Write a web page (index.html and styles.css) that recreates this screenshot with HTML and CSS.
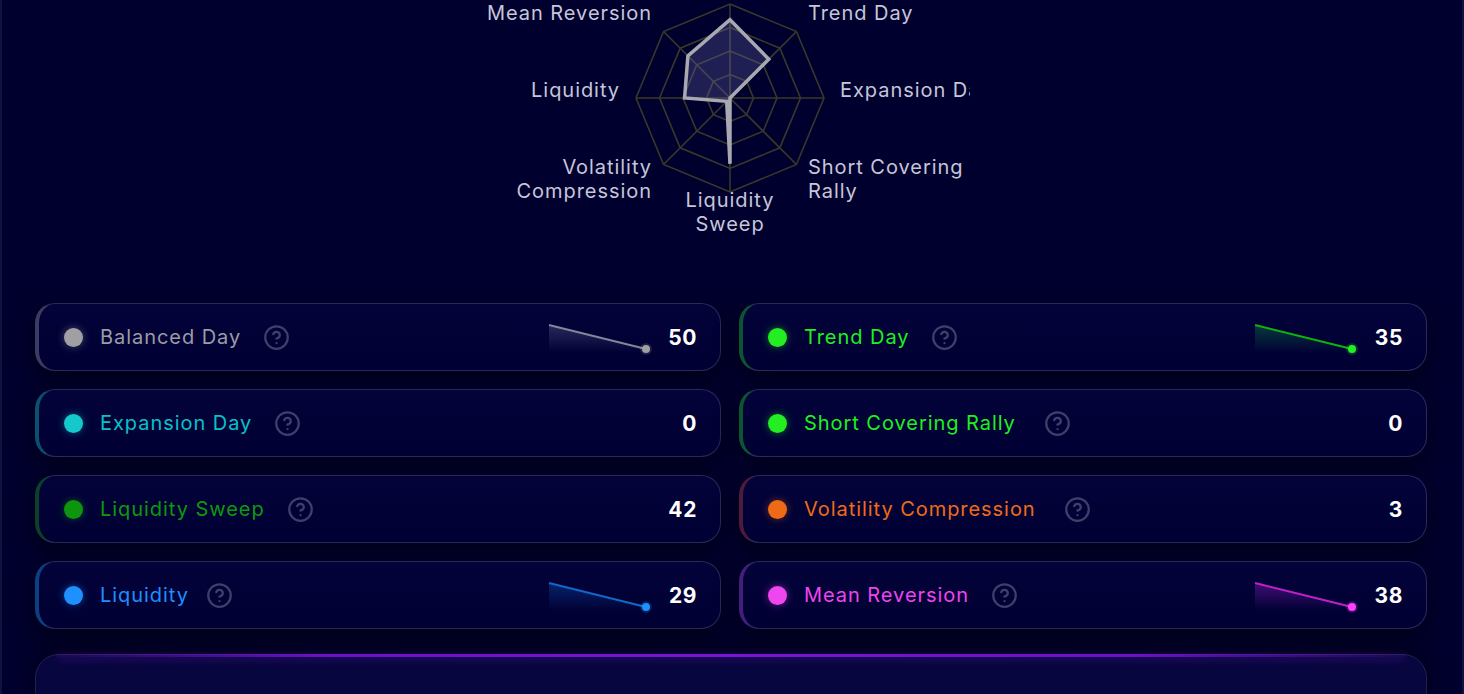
FILE: index.html
```html
<!DOCTYPE html>
<html>
<head>
<meta charset="utf-8">
<link rel="stylesheet" href="styles.css">
</head>
<body>
<div class="panel">
  <section class="chart">
    <svg class="radar" width="480" height="260" viewBox="0 0 480 260">
      <defs>
        <clipPath id="labelClip"><rect x="-60" y="-20" width="540" height="300"/></clipPath>
      </defs>
      <g class="grid-lines">
        <polygon points="240,4 306.47,31.53 334,98 306.47,164.47 240,192 173.53,164.47 146,98 173.53,31.53"/>
        <polygon points="240,27.5 289.85,48.15 310.5,98 289.85,147.85 240,168.5 190.15,147.85 169.5,98 190.15,48.15"/>
        <polygon points="240,51 273.23,64.77 287,98 273.23,131.23 240,145 206.77,131.23 193,98 206.77,64.77"/>
        <polygon points="240,74.5 256.62,81.38 263.5,98 256.62,114.62 240,121.5 223.38,114.62 216.5,98 223.38,81.38"/>
        <line x1="240" y1="98" x2="240" y2="4"/>
        <line x1="240" y1="98" x2="306.47" y2="31.53"/>
        <line x1="240" y1="98" x2="334" y2="98"/>
        <line x1="240" y1="98" x2="306.47" y2="164.47"/>
        <line x1="240" y1="98" x2="240" y2="192"/>
        <line x1="240" y1="98" x2="173.53" y2="164.47"/>
        <line x1="240" y1="98" x2="146" y2="98"/>
        <line x1="240" y1="98" x2="173.53" y2="31.53"/>
      </g>
      <polygon class="data" points="240,19.67 278.77,59.23 240,98 240,98 240,163.8 236.68,101.32 194.57,98 197.9,55.9"/>
      <g class="labels" clip-path="url(#labelClip)">
        <text x="162" y="20" text-anchor="end">Mean Reversion</text>
        <text x="318" y="20">Trend Day</text>
        <text x="130" y="97" text-anchor="end">Liquidity</text>
        <text x="350" y="97">Expansion Day</text>
        <text x="162" y="174" text-anchor="end">Volatility</text>
        <text x="162" y="198" text-anchor="end">Compression</text>
        <text x="318" y="174">Short Covering</text>
        <text x="318" y="198">Rally</text>
        <text x="240" y="207" text-anchor="middle">Liquidity</text>
        <text x="240" y="231" text-anchor="middle">Sweep</text>
      </g>
    </svg>
  </section>

  <div class="cards">
    <div class="card t-balanced">
      <span class="dot"></span>
      <span class="name">Balanced Day</span>
      <svg class="help" viewBox="0 0 24 24"><circle cx="12" cy="12" r="10"/><path d="M9.09 9a3 3 0 0 1 5.83 1c0 2-3 3-3 3"/><path d="M12 17h.01"/></svg>
      <span class="spacer"></span>
      <svg class="spark" viewBox="0 0 104 30"><defs><linearGradient id="g1" x1="0" y1="0" x2="0" y2="1"><stop offset="0" stop-color="#7070a0" stop-opacity="0.35"/><stop offset="1" stop-color="#7070a0" stop-opacity="0"/></linearGradient></defs><polygon points="2,3 99,27 104,30 2,30" fill="url(#g1)"/><line x1="2" y1="3" x2="99" y2="27" stroke="#85859a" stroke-width="2"/><circle cx="99" cy="27" r="6" fill="#a0a0a0" opacity="0.18"/><circle cx="99" cy="27" r="4" fill="#a0a0a0"/></svg>
      <span class="value">50</span>
    </div>
    <div class="card t-trend">
      <span class="dot"></span>
      <span class="name">Trend Day</span>
      <svg class="help" viewBox="0 0 24 24"><circle cx="12" cy="12" r="10"/><path d="M9.09 9a3 3 0 0 1 5.83 1c0 2-3 3-3 3"/><path d="M12 17h.01"/></svg>
      <span class="spacer"></span>
      <svg class="spark" viewBox="0 0 104 30"><defs><linearGradient id="g2" x1="0" y1="0" x2="0" y2="1"><stop offset="0" stop-color="#10a040" stop-opacity="0.35"/><stop offset="1" stop-color="#10a040" stop-opacity="0"/></linearGradient></defs><polygon points="2,3 99,27 104,30 2,30" fill="url(#g2)"/><line x1="2" y1="3" x2="99" y2="27" stroke="#0eb30e" stroke-width="2"/><circle cx="99" cy="27" r="6" fill="#22ee22" opacity="0.2"/><circle cx="99" cy="27" r="4" fill="#22ee22"/></svg>
      <span class="value">35</span>
    </div>

    <div class="card t-expansion">
      <span class="dot"></span>
      <span class="name">Expansion Day</span>
      <svg class="help" viewBox="0 0 24 24"><circle cx="12" cy="12" r="10"/><path d="M9.09 9a3 3 0 0 1 5.83 1c0 2-3 3-3 3"/><path d="M12 17h.01"/></svg>
      <span class="spacer"></span>
      <span class="value">0</span>
    </div>
    <div class="card t-trend">
      <span class="dot"></span>
      <span class="name">Short Covering Rally</span>
      <svg class="help help-wide" viewBox="0 0 24 24"><circle cx="12" cy="12" r="10"/><path d="M9.09 9a3 3 0 0 1 5.83 1c0 2-3 3-3 3"/><path d="M12 17h.01"/></svg>
      <span class="spacer"></span>
      <span class="value">0</span>
    </div>

    <div class="card t-sweep">
      <span class="dot"></span>
      <span class="name">Liquidity Sweep</span>
      <svg class="help" viewBox="0 0 24 24"><circle cx="12" cy="12" r="10"/><path d="M9.09 9a3 3 0 0 1 5.83 1c0 2-3 3-3 3"/><path d="M12 17h.01"/></svg>
      <span class="spacer"></span>
      <span class="value">42</span>
    </div>
    <div class="card t-vol">
      <span class="dot"></span>
      <span class="name">Volatility Compression</span>
      <svg class="help help-wide" viewBox="0 0 24 24"><circle cx="12" cy="12" r="10"/><path d="M9.09 9a3 3 0 0 1 5.83 1c0 2-3 3-3 3"/><path d="M12 17h.01"/></svg>
      <span class="spacer"></span>
      <span class="value">3</span>
    </div>

    <div class="card t-liq">
      <span class="dot"></span>
      <span class="name">Liquidity</span>
      <svg class="help help-narrow" viewBox="0 0 24 24"><circle cx="12" cy="12" r="10"/><path d="M9.09 9a3 3 0 0 1 5.83 1c0 2-3 3-3 3"/><path d="M12 17h.01"/></svg>
      <span class="spacer"></span>
      <svg class="spark" viewBox="0 0 104 30"><defs><linearGradient id="g3" x1="0" y1="0" x2="0" y2="1"><stop offset="0" stop-color="#1060d0" stop-opacity="0.35"/><stop offset="1" stop-color="#1060d0" stop-opacity="0"/></linearGradient></defs><polygon points="2,3 99,27 104,30 2,30" fill="url(#g3)"/><line x1="2" y1="3" x2="99" y2="27" stroke="#1268c8" stroke-width="2"/><circle cx="99" cy="27" r="6" fill="#1e90ff" opacity="0.2"/><circle cx="99" cy="27" r="4" fill="#1e90ff"/></svg>
      <span class="value">29</span>
    </div>
    <div class="card t-mr">
      <span class="dot"></span>
      <span class="name">Mean Reversion</span>
      <svg class="help" viewBox="0 0 24 24"><circle cx="12" cy="12" r="10"/><path d="M9.09 9a3 3 0 0 1 5.83 1c0 2-3 3-3 3"/><path d="M12 17h.01"/></svg>
      <span class="spacer"></span>
      <svg class="spark" viewBox="0 0 104 30"><defs><linearGradient id="g4" x1="0" y1="0" x2="0" y2="1"><stop offset="0" stop-color="#a020d0" stop-opacity="0.4"/><stop offset="1" stop-color="#a020d0" stop-opacity="0"/></linearGradient></defs><polygon points="2,3 99,27 104,30 2,30" fill="url(#g4)"/><line x1="2" y1="3" x2="99" y2="27" stroke="#c020c8" stroke-width="2"/><circle cx="99" cy="27" r="6" fill="#ff40ff" opacity="0.2"/><circle cx="99" cy="27" r="4" fill="#ff40ff"/></svg>
      <span class="value">38</span>
    </div>
  </div>

  <div class="bottom-card"></div>
</div>
</body>
</html>
```

FILE: styles.css
```css
* { box-sizing: border-box; }

html, body {
  margin: 0;
  padding: 0;
  height: 100%;
  overflow: hidden;
  background: #00002c;
  font-family: Inter, "Noto Sans", "Liberation Sans", sans-serif;
}

.panel {
  margin-top: -30px;
  padding: 28px 35px 0 33px;
  border: 2px solid #12123e;
  border-radius: 26px;
  background: #00002e;
  min-height: 800px;
}

.chart {
  height: 303px;
  display: flex;
  justify-content: center;
  padding-right: 2px;
}

.radar {
  display: block;
  overflow: visible;
}

.grid-lines polygon,
.grid-lines line {
  fill: none;
  stroke: #3a3829;
  stroke-width: 1.6;
}

.data {
  fill: rgba(110, 110, 180, 0.28);
  stroke: #a8a8b0;
  stroke-width: 3.5;
  stroke-linejoin: miter;
}

.labels text {
  font-family: Inter, "Noto Sans", "Liberation Sans", sans-serif;
  font-size: 20px;
  letter-spacing: 0.95px;
  fill: #c6c6d8;
}

.cards {
  display: grid;
  grid-template-columns: 686px 688px;
  column-gap: 18px;
  row-gap: 18px;
}

.card {
  --c: #a0a0a0;
  --edge: rgba(140, 140, 170, 0.35);
  height: 68px;
  display: flex;
  align-items: center;
  padding: 0 23px 0 25px;
  border: 1.5px solid #29295a;
  border-left: 4px solid var(--edge);
  border-radius: 20px;
  background: linear-gradient(180deg, #03033a 0%, #000033 100%);
  box-shadow: 0 8px 22px rgba(0, 0, 12, 0.6);
}

.dot {
  width: 19px;
  height: 19px;
  border-radius: 50%;
  background: var(--c);
  box-shadow: 0 0 8px color-mix(in srgb, var(--c) 45%, transparent);
  flex: none;
}

.name {
  margin-left: 17px;
  font-size: 20px;
  letter-spacing: 0.95px;
  color: var(--c);
  white-space: nowrap;
}

.help {
  width: 27px;
  height: 27px;
  margin-left: 22px;
  fill: none;
  stroke: #3f3f6a;
  stroke-width: 2;
  stroke-linecap: round;
  stroke-linejoin: round;
  flex: none;
}

.help-wide { margin-left: 28px; }
.help-narrow { margin-left: 17px; }

.spacer { flex: 1; }

.spark {
  width: 104px;
  height: 30px;
  margin-right: 14px;
  flex: none;
  overflow: visible;
}

.value {
  min-width: 32px;
  text-align: right;
  font-size: 21px;
  letter-spacing: 0.6px;
  font-weight: 700;
  color: #ffffff;
}

.t-balanced { --c: #a0a0a4; --edge: #3c3c62; }
.t-balanced .name { color: #9c9ca4; }
.t-trend { --c: #22ee22; --edge: #0c5530; }
.t-trend .name { color: #1ff01f; }
.t-expansion { --c: #14c8cc; --edge: #0a5070; }
.t-expansion .name { color: #06c2c8; }
.t-sweep { --c: #0d960d; --edge: #0c4028; }
.t-sweep .name { color: #0c9a0c; }
.t-vol { --c: #ee6a16; --edge: #4e1c3a; }
.t-vol .name { color: #f06b16; }
.t-liq { --c: #1e90ff; --edge: #0c4080; }
.t-liq .name { color: #1e90ff; }
.t-mr { --c: #f046f0; --edge: #441e7a; }
.t-mr .name { color: #ee44ee; }

.bottom-card {
  position: relative;
  margin-top: 25px;
  height: 140px;
  border: 1.5px solid #20204e;
  border-radius: 24px;
  background: linear-gradient(180deg, #08063e 0%, #04043a 100%);
  box-shadow: 0 -6px 20px rgba(0, 0, 12, 0.5);
}

.bottom-card::before {
  content: "";
  position: absolute;
  left: 20px;
  right: 20px;
  top: -1.5px;
  height: 3px;
  border-radius: 2px;
  background: linear-gradient(90deg, rgba(90, 20, 180, 0.2) 0%, #6a12c4 20%, #7a14d8 50%, #6a12c4 80%, rgba(90, 20, 180, 0.2) 100%);
  box-shadow: 0 2px 10px rgba(120, 30, 220, 0.45);
}
```
